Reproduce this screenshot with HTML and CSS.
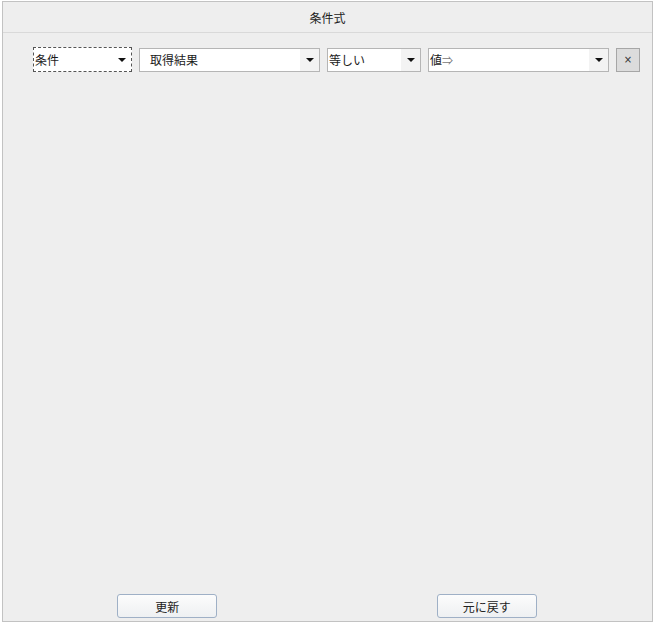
FILE: index.html
```html
<!DOCTYPE html>
<html lang="ja">
<head>
    <meta charset="UTF-8">
    <title>条件式</title>
    <link rel="stylesheet" href="styles.css">
</head>
<body>
    <div class="panel">
        <div class="panel-header">条件式</div>

        <div class="panel-body">
            <div class="condition-row">
                <div class="combo combo-focus w-cond">
                    <span class="combo-text">条件</span>
                    <span class="combo-arrow"></span>
                </div>
                <div class="combo w-wide">
                    <span class="combo-text pad">取得結果</span>
                    <span class="combo-arrow"></span>
                </div>
                <div class="combo w-op">
                    <span class="combo-text">等しい</span>
                    <span class="combo-arrow"></span>
                </div>
                <div class="combo w-wide">
                    <span class="combo-text">値<span class="value-arrow">⇒</span></span>
                    <span class="combo-arrow"></span>
                </div>
                <button class="remove-btn">×</button>
            </div>
        </div>

        <div class="panel-footer">
            <div class="footer-cell"><button class="btn">更新</button></div>
            <div class="footer-cell"><button class="btn">元に戻す</button></div>
        </div>
    </div>
</body>
</html>
```

FILE: styles.css
```css
* {
    margin: 0;
    padding: 0;
    box-sizing: border-box;
}

body {
    font-family: "Noto Sans CJK JP", "Noto Sans", sans-serif;
    font-size: 12px;
    color: #1a1a1a;
    background: #ffffff;
    width: 655px;
    height: 623px;
    padding: 1px 2px 1px 2px;
}

.panel {
    width: 651px;
    height: 621px;
    border: 1px solid #c2c2c2;
    background: #eeeeee;
    display: flex;
    flex-direction: column;
}

.panel-header {
    height: 31px;
    border-bottom: 1px solid #d9d9d9;
    display: flex;
    align-items: center;
    justify-content: center;
    font-size: 12px;
    color: #222;
}

.panel-body {
    flex: 1;
    padding: 14px 0 0 30px;
}

.condition-row {
    display: flex;
    gap: 7px;
    align-items: center;
}

.combo {
    height: 24px;
    background: #ffffff;
    border: 1px solid #b5b5b5;
    display: flex;
    align-items: center;
}

.combo-focus {
    height: 25px;
    border: 1px dashed #555;
}

.w-cond { width: 99px; }
.w-wide { width: 181px; }
.w-op { width: 94px; }

.combo-text {
    flex: 1;
    padding-left: 1px;
    white-space: nowrap;
    line-height: 1;
}

.combo-text.pad {
    padding-left: 10px;
}

.value-arrow {
    font-family: "Noto Sans CJK JP", sans-serif;
    font-size: 11px;
    color: #777;
}

.combo-arrow {
    width: 19px;
    height: 100%;
    background: #f3f3f3;
    display: flex;
    align-items: center;
    justify-content: center;
}

.combo-focus .combo-arrow {
    background: #ffffff;
}

.combo-arrow::after {
    content: "";
    border-left: 4px solid transparent;
    border-right: 4px solid transparent;
    border-top: 4px solid #111;
}

.remove-btn {
    width: 24px;
    height: 24px;
    border: 1px solid #a6a6a6;
    background: #dcdcdc;
    font-family: "DejaVu Sans", sans-serif;
    font-size: 10px;
    color: #333;
    line-height: 1;
}

.panel-footer {
    display: grid;
    grid-template-columns: 1fr 1fr;
    padding-bottom: 3px;
}

.footer-cell {
    display: flex;
    justify-content: center;
}

.footer-cell:first-child {
    padding-left: 4px;
}

.footer-cell:last-child {
    padding-right: 6px;
}

.btn {
    width: 100px;
    height: 24px;
    border: 1px solid #9fb0c6;
    border-radius: 3px;
    background: linear-gradient(#fcfcfc, #eef0f2);
    font-family: "Noto Sans CJK JP", sans-serif;
    font-size: 12px;
    color: #222;
}
```
